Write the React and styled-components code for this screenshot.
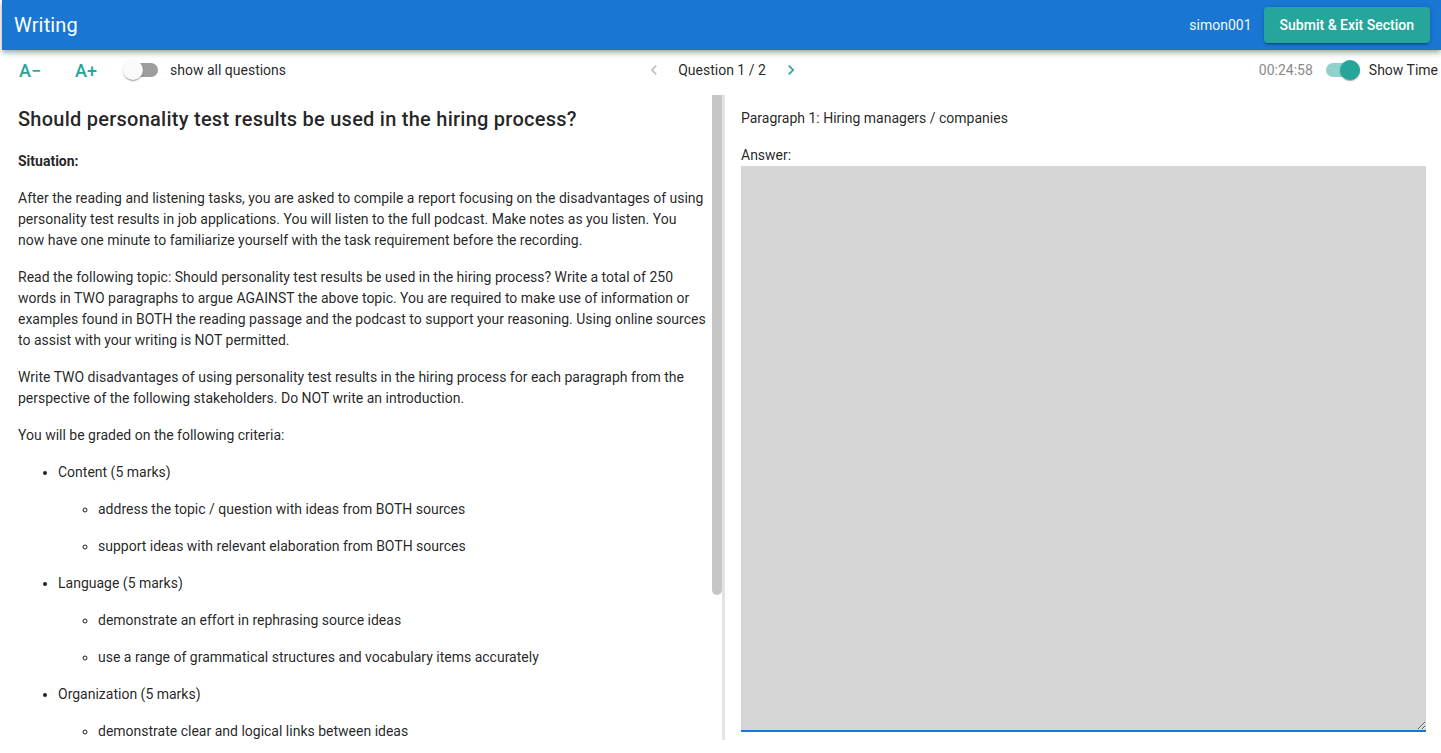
import React from "react";
import styled, { createGlobalStyle } from "styled-components";

const Global = createGlobalStyle`
  html, body { margin: 0; padding: 0; background: #fff; }
  body { font-family: Roboto, "Liberation Sans", sans-serif; color: rgba(0,0,0,0.87); }
  * { box-sizing: border-box; }
`;

const Page = styled.div`
  height: 753px;
  display: flex;
  flex-direction: column;
  overflow: hidden;
`;

const AppBar = styled.header`
  margin-left: 2px;
  height: 50px;
  background: #1976d2;
  color: #fff;
  display: flex;
  align-items: center;
  padding: 0 11px 0 12px;
  box-shadow: 0 2px 4px -1px rgba(0,0,0,0.2), 0 4px 5px 0 rgba(0,0,0,0.14), 0 1px 10px 0 rgba(0,0,0,0.12);
  position: relative;
  z-index: 2;
`;

const Title = styled.h1`
  margin: 0;
  font-size: 20px;
  font-weight: 400;
  letter-spacing: 0.15px;
  flex: 1;
`;

const User = styled.span`
  font-size: 14px;
  margin-right: 12px;
  opacity: 0.95;
`;

const SubmitButton = styled.button`
  height: 36px;
  padding: 0 16px;
  border: none;
  border-radius: 4px;
  background: #26a69a;
  color: #fff;
  font-family: inherit;
  font-size: 14px;
  font-weight: 500;
  box-shadow: 0 3px 1px -2px rgba(0,0,0,0.2), 0 2px 2px 0 rgba(0,0,0,0.14), 0 1px 5px 0 rgba(0,0,0,0.12);
`;

const Toolbar = styled.div`
  height: 40px;
  display: grid;
  grid-template-columns: 1fr auto 1fr;
  align-items: center;
  padding: 0 3px 0 7px;
`;

const Group = styled.div`
  display: flex;
  align-items: center;
  justify-content: ${p => p.$end ? "flex-end" : p.$center ? "center" : "flex-start"};
  padding-left: ${p => p.$indent || 0}px;
`;

const SizeButton = styled.span`
  color: #26a69a;
  font-size: 18px;
  font-weight: 500;
  width: 23px;
  margin-right: ${p => p.$gap || 0}px;
`;

const Switch = styled.span`
  position: relative;
  width: 34px;
  height: 14px;
  border-radius: 7px;
  background: ${p => p.$on ? "rgba(38,166,154,0.5)" : "#9e9e9e"};
  margin: 0 ${p => p.$mr || 12}px 0 ${p => p.$ml || 0}px;
  &::after {
    content: "";
    position: absolute;
    top: -3px;
    left: ${p => p.$on ? "14px" : "-1px"};
    width: 20px;
    height: 20px;
    border-radius: 50%;
    background: ${p => p.$on ? "#26a69a" : "#fafafa"};
    box-shadow: 0 2px 1px -1px rgba(0,0,0,0.2), 0 1px 1px 0 rgba(0,0,0,0.14), 0 1px 3px 0 rgba(0,0,0,0.12);
  }
`;

const Label = styled.span`
  font-size: 14px;
  color: ${p => p.$muted ? "#8a8a8a" : "rgba(0,0,0,0.87)"};
`;

const Arrow = styled.svg`
  width: 20px;
  height: 20px;
  margin: 0 ${p => p.$mr || 0}px 0 ${p => p.$ml || 0}px;
`;

const Body = styled.div`
  flex: 1;
  display: flex;
  min-height: 0;
  padding: 5px 0 13px;
`;

const LeftPanel = styled.div`
  width: 725px;
  flex: none;
  display: flex;
  border-right: 3px solid #e4e4e4;
`;

const Reading = styled.div`
  flex: 1;
  overflow: hidden;
  padding: 3px 6px 0 18px;
  font-size: 14px;
  line-height: 21px;
`;

const ScrollTrack = styled.div`
  width: 10px;
  flex: none;
  background: #fff;
`;

const ScrollThumb = styled.div`
  height: 500px;
  background: #c6c6c6;
  border-radius: 0 0 5px 5px;
`;

const Heading = styled.h2`
  margin: 7px 0 18px;
  font-size: 20px;
  line-height: 28px;
  font-weight: 500;
  letter-spacing: 0.25px;
`;

const Para = styled.p`
  margin: 16px 0;
  font-weight: ${p => p.$bold ? 700 : 400};
`;

const List = styled.ul`
  margin: 0;
  padding-left: 40px;
  list-style-type: ${p => p.$nested ? "circle" : "disc"};
  li { margin: 16px 0; }
`;

const RightPanel = styled.div`
  flex: 1;
  padding: 13px 15px 8px 16px;
  display: flex;
  flex-direction: column;
  font-size: 14px;
  line-height: 20px;
`;

const FieldLabel = styled.div`
  margin-bottom: ${p => p.$mb || 0}px;
`;

const Answer = styled.textarea`
  flex: 1;
  width: 100%;
  background: #d6d6d6;
  border: none;
  border-bottom: 2px solid #1976d2;
  outline: none;
  resize: vertical;
  font-family: inherit;
  font-size: 14px;
  padding: 8px;
  margin-top: 1px;
`;

export default function App() {
  return (
    <Page>
      <Global />
      <AppBar>
        <Title>Writing</Title>
        <User>simon001</User>
        <SubmitButton>Submit &amp; Exit Section</SubmitButton>
      </AppBar>
      <Toolbar>
        <Group $indent={12}>
          <SizeButton $gap={33}>A−</SizeButton>
          <SizeButton $gap={26}>A+</SizeButton>
          <Switch />
          <Label>show all questions</Label>
        </Group>
        <Group $center>
          <Arrow viewBox="0 0 24 24" $mr={14}>
            <path d="M15.4 7.4 14 6l-6 6 6 6 1.4-1.4L10.8 12z" fill="#bdbdbd" />
          </Arrow>
          <Label>Question 1 / 2</Label>
          <Arrow viewBox="0 0 24 24" $ml={15}>
            <path d="M10 6 8.6 7.4 13.2 12l-4.6 4.6L10 18l6-6z" fill="#26a69a" />
          </Arrow>
        </Group>
        <Group $end>
          <Label $muted>00:24:58</Label>
          <Switch $on $ml={13} $mr={9} />
          <Label>Show Time</Label>
        </Group>
      </Toolbar>
      <Body>
        <LeftPanel>
          <Reading>
            <Heading>Should personality test results be used in the hiring process?</Heading>
            <Para $bold>Situation:</Para>
            <Para>
              After the reading and listening tasks, you are asked to compile a report focusing on the disadvantages of using
              personality test results in job applications. You will listen to the full podcast. Make notes as you listen. You
              now have one minute to familiarize yourself with the task requirement before the recording.
            </Para>
            <Para>
              Read the following topic: Should personality test results be used in the hiring process? Write a total of 250
              words in TWO paragraphs to argue AGAINST the above topic. You are required to make use of information or
              examples found in BOTH the reading passage and the podcast to support your reasoning. Using online sources
              to assist with your writing is NOT permitted.
            </Para>
            <Para>
              Write TWO disadvantages of using personality test results in the hiring process for each paragraph from the
              perspective of the following stakeholders. Do NOT write an introduction.
            </Para>
            <Para>You will be graded on the following criteria:</Para>
            <List>
              <li>
                Content (5 marks)
                <List $nested>
                  <li>address the topic / question with ideas from BOTH sources</li>
                  <li>support ideas with relevant elaboration from BOTH sources</li>
                </List>
              </li>
              <li>
                Language (5 marks)
                <List $nested>
                  <li>demonstrate an effort in rephrasing source ideas</li>
                  <li>use a range of grammatical structures and vocabulary items accurately</li>
                </List>
              </li>
              <li>
                Organization (5 marks)
                <List $nested>
                  <li>demonstrate clear and logical links between ideas</li>
                </List>
              </li>
            </List>
          </Reading>
          <ScrollTrack>
            <ScrollThumb />
          </ScrollTrack>
        </LeftPanel>
        <RightPanel>
          <FieldLabel $mb={17}>Paragraph 1: Hiring managers / companies</FieldLabel>
          <FieldLabel>Answer:</FieldLabel>
          <Answer />
        </RightPanel>
      </Body>
    </Page>
  );
}
